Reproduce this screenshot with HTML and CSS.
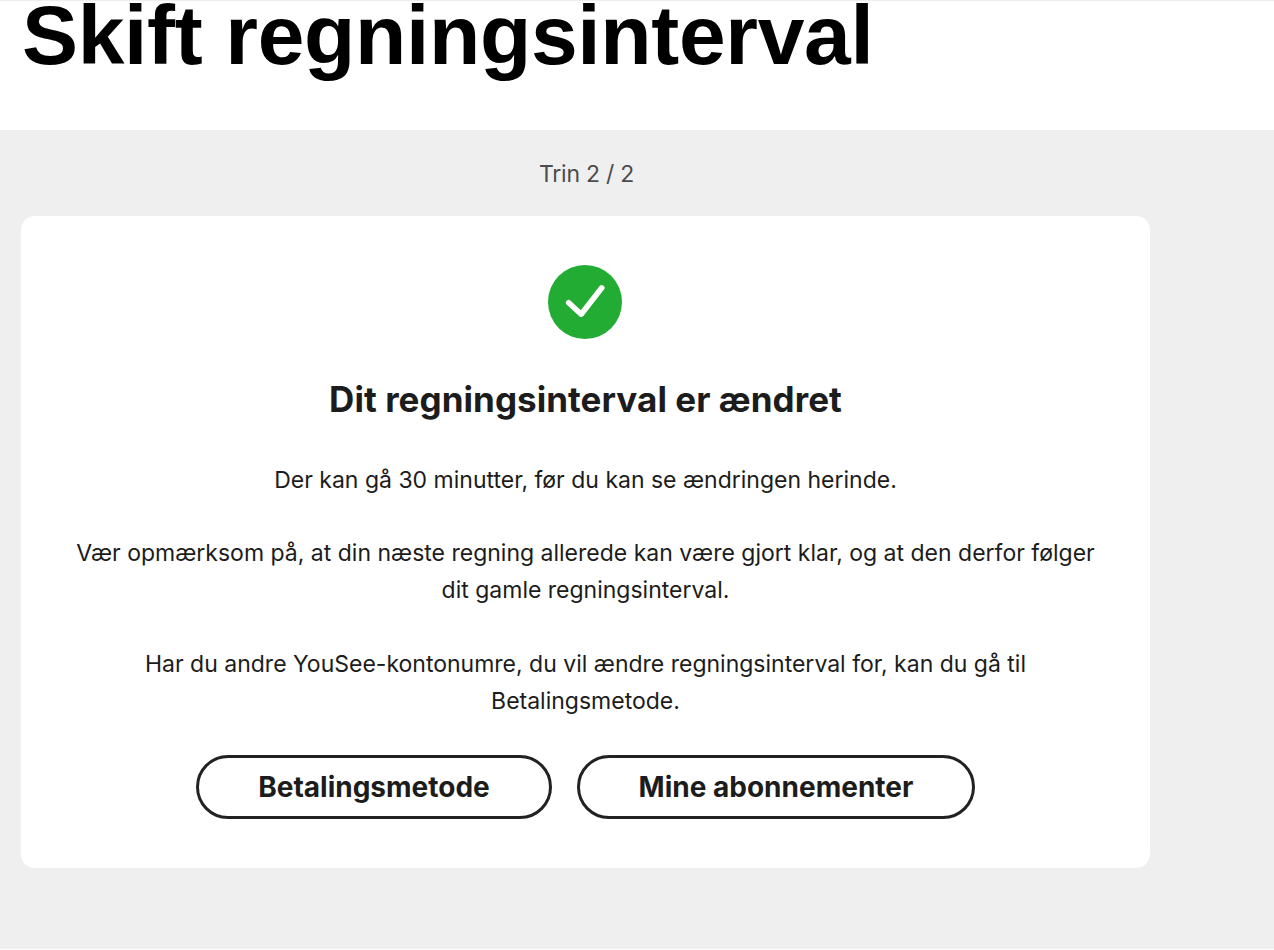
FILE: index.html
```html
<!DOCTYPE html>
<html lang="da">
<head>
<meta charset="utf-8">
<title>Skift regningsinterval</title>
<link rel="stylesheet" href="styles.css">
</head>
<body>
<header class="hero">
  <h1 class="hero-title">Skift regningsinterval</h1>
</header>
<main class="main">
  <p class="step">Trin 2 / 2</p>
  <section class="card">
    <svg class="check" width="74" height="74" viewBox="0 0 74 74" aria-hidden="true">
      <circle cx="37" cy="37" r="37" fill="#22ac34"/>
      <path d="M20.700 37.700 L33.200 49.200 L53.800 22.800" fill="none" stroke="#fff" stroke-width="5.500" stroke-linecap="round" stroke-linejoin="round"/>
    </svg>
    <h2 class="card-title">Dit regningsinterval er ændret</h2>
    <p class="text first">Der kan gå 30 minutter, før du kan se ændringen herinde.</p>
    <p class="text">Vær opmærksom på, at din næste regning allerede kan være gjort klar, og at den derfor følger dit gamle regningsinterval.</p>
    <p class="text narrow">Har du andre YouSee-kontonumre, du vil ændre regningsinterval for, kan du gå til Betalingsmetode.</p>
    <div class="actions">
      <a class="btn btn-a">Betalingsmetode</a>
      <a class="btn btn-b">Mine abonnementer</a>
    </div>
  </section>
</main>
</body>
</html>
```
FILE: styles.css
```css
* { box-sizing: border-box; }
html, body { margin: 0; padding: 0; height: 100%; }
body {
  background: #fff;
  color: #1c1c1c;
  font-family: "Inter", "Liberation Sans", sans-serif;
  overflow: hidden;
}
.hero {
  height: 130px;
  padding: 1px 0 0 22px;
  background: #fff;
  box-shadow: inset 0 2px 2px -2px rgba(0, 0, 0, 0.25);
}
.hero-title {
  margin: 0;
  font-family: "Liberation Sans", Arial, sans-serif;
  font-size: 84px;
  font-weight: 700;
  line-height: 68px;
  letter-spacing: -0.34px;
  color: #000;
  white-space: nowrap;
}
.main {
  height: 819px;
  padding: 0 124px 0 21px;
  background: #efefef;
}
.step {
  margin: 0;
  padding: 31px 0 0 2px;
  height: 86px;
  text-align: center;
  font-size: 23px;
  line-height: 26px;
  color: #4c4c4c;
  letter-spacing: -0.25px;
}
.card {
  width: 1129px;
  height: 652px;
  padding-top: 49px;
  background: #fff;
  border-radius: 14px;
  display: flex;
  flex-direction: column;
  align-items: center;
  text-align: center;
}
.check { display: block; flex: none; margin-right: 1px; }
.card-title {
  margin: 40px 0 0;
  font-size: 35px;
  line-height: 40px;
  font-weight: 700;
  letter-spacing: 0.05px;
  color: #1c1c1c;
}
.text {
  margin: 37px 0 0;
  width: 1030px;
  font-size: 23px;
  line-height: 37px;
  color: #1c1c1c;
}
.text.first { margin-top: 44px; line-height: 35px; }
.text.narrow { width: 900px; }
.actions {
  display: flex;
  gap: 25px;
  margin-top: 35px;
}
.btn {
  display: flex;
  align-items: center;
  justify-content: center;
  height: 64px;
  border: 3px solid #222;
  border-radius: 32px;
  font-size: 28px;
  font-weight: 700;
  color: #1c1c1c;
}
.btn-a { width: 356px; }
.btn-b { width: 398px; }
```
